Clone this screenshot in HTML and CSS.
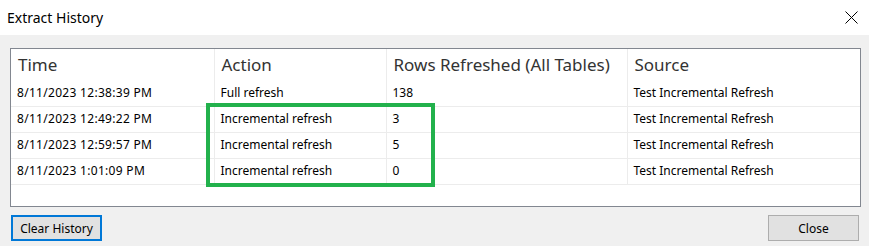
FILE: index.html
```html
<!DOCTYPE html>
<html lang="en">
<head>
    <meta charset="UTF-8">
    <title>Extract History</title>
    <link rel="stylesheet" href="styles.css">
</head>
<body>
    <div class="dialog">
        <div class="title-bar">
            <span class="title">Extract History</span>
            <span class="close-x">
                <svg width="13" height="13" viewBox="0 0 13 13">
                    <path d="M0.5 0.5 L12.5 12.5 M12.5 0.5 L0.5 12.5" stroke="#000" stroke-width="1" fill="none"/>
                </svg>
            </span>
        </div>
        <div class="content">
            <div class="history-box">
                <table class="history">
                    <colgroup>
                        <col class="c-time">
                        <col class="c-action">
                        <col class="c-rows">
                        <col class="c-source">
                    </colgroup>
                    <thead>
                        <tr>
                            <th>Time</th>
                            <th>Action</th>
                            <th>Rows Refreshed (All Tables)</th>
                            <th>Source</th>
                        </tr>
                    </thead>
                    <tbody>
                        <tr>
                            <td>8/11/2023 12:38:39 PM</td>
                            <td>Full refresh</td>
                            <td>138</td>
                            <td>Test Incremental Refresh</td>
                        </tr>
                        <tr>
                            <td>8/11/2023 12:49:22 PM</td>
                            <td>Incremental refresh</td>
                            <td>3</td>
                            <td>Test Incremental Refresh</td>
                        </tr>
                        <tr>
                            <td>8/11/2023 12:59:57 PM</td>
                            <td>Incremental refresh</td>
                            <td>5</td>
                            <td>Test Incremental Refresh</td>
                        </tr>
                        <tr>
                            <td>8/11/2023 1:01:09 PM</td>
                            <td>Incremental refresh</td>
                            <td>0</td>
                            <td>Test Incremental Refresh</td>
                        </tr>
                    </tbody>
                </table>
                <div class="highlight"></div>
            </div>
            <div class="buttons">
                <button class="btn btn-focus">Clear History</button>
                <button class="btn">Close</button>
            </div>
        </div>
    </div>
</body>
</html>
```

FILE: styles.css
```css
* {
    margin: 0;
    padding: 0;
    box-sizing: border-box;
}

body {
    width: 869px;
    height: 246px;
    overflow: hidden;
    background: #f0f0f0;
    font-family: "Noto Sans", "Open Sans", sans-serif;
}

.dialog {
    display: flex;
    flex-direction: column;
    height: 246px;
}

.title-bar {
    height: 35px;
    background: #fff;
    display: flex;
    align-items: center;
    justify-content: space-between;
    padding: 0 11px 1px 7px;
}

.title {
    font-size: 14px;
    color: #000;
}

.close-x {
    display: flex;
}

.content {
    padding: 13px 9px 0 10px;
}

.history-box {
    position: relative;
    width: 851px;
    height: 159px;
    background: #fff;
    border: 1px solid #828790;
}

.history {
    border-collapse: collapse;
    table-layout: fixed;
    width: 849px;
}

.c-time { width: 203px; }
.c-action { width: 172px; }
.c-rows { width: 241px; }
.c-source { width: 233px; }

.history th {
    height: 31px;
    text-align: left;
    font-weight: 400;
    font-size: 17px;
    color: #333;
    padding: 0 0 0 7px;
    border-left: 1px solid #ececec;
    white-space: nowrap;
}

.history td {
    height: 26px;
    font-size: 12px;
    color: #000;
    padding: 0 0 1px 6px;
    border-left: 1px solid #ececec;
    border-bottom: 1px solid #ececec;
    white-space: nowrap;
}

.history td:first-child {
    letter-spacing: 0.3px;
}

.history th:first-child,
.history td:first-child {
    border-left: none;
}

/* green annotation drawn over the middle rows */
.highlight {
    position: absolute;
    left: 195px;
    top: 54px;
    width: 229px;
    height: 84px;
    border: 4px solid #22b14c;
}

.buttons {
    display: flex;
    justify-content: space-between;
    margin-top: 8px;
    padding: 0 1px;
}

.btn {
    width: 91px;
    height: 26px;
    background: #e1e1e1;
    border: 1px solid #adadad;
    font-family: "Noto Sans", "Open Sans", sans-serif;
    font-size: 12px;
    color: #000;
}

.btn-focus {
    border: 2px solid #0078d7;
}
```
